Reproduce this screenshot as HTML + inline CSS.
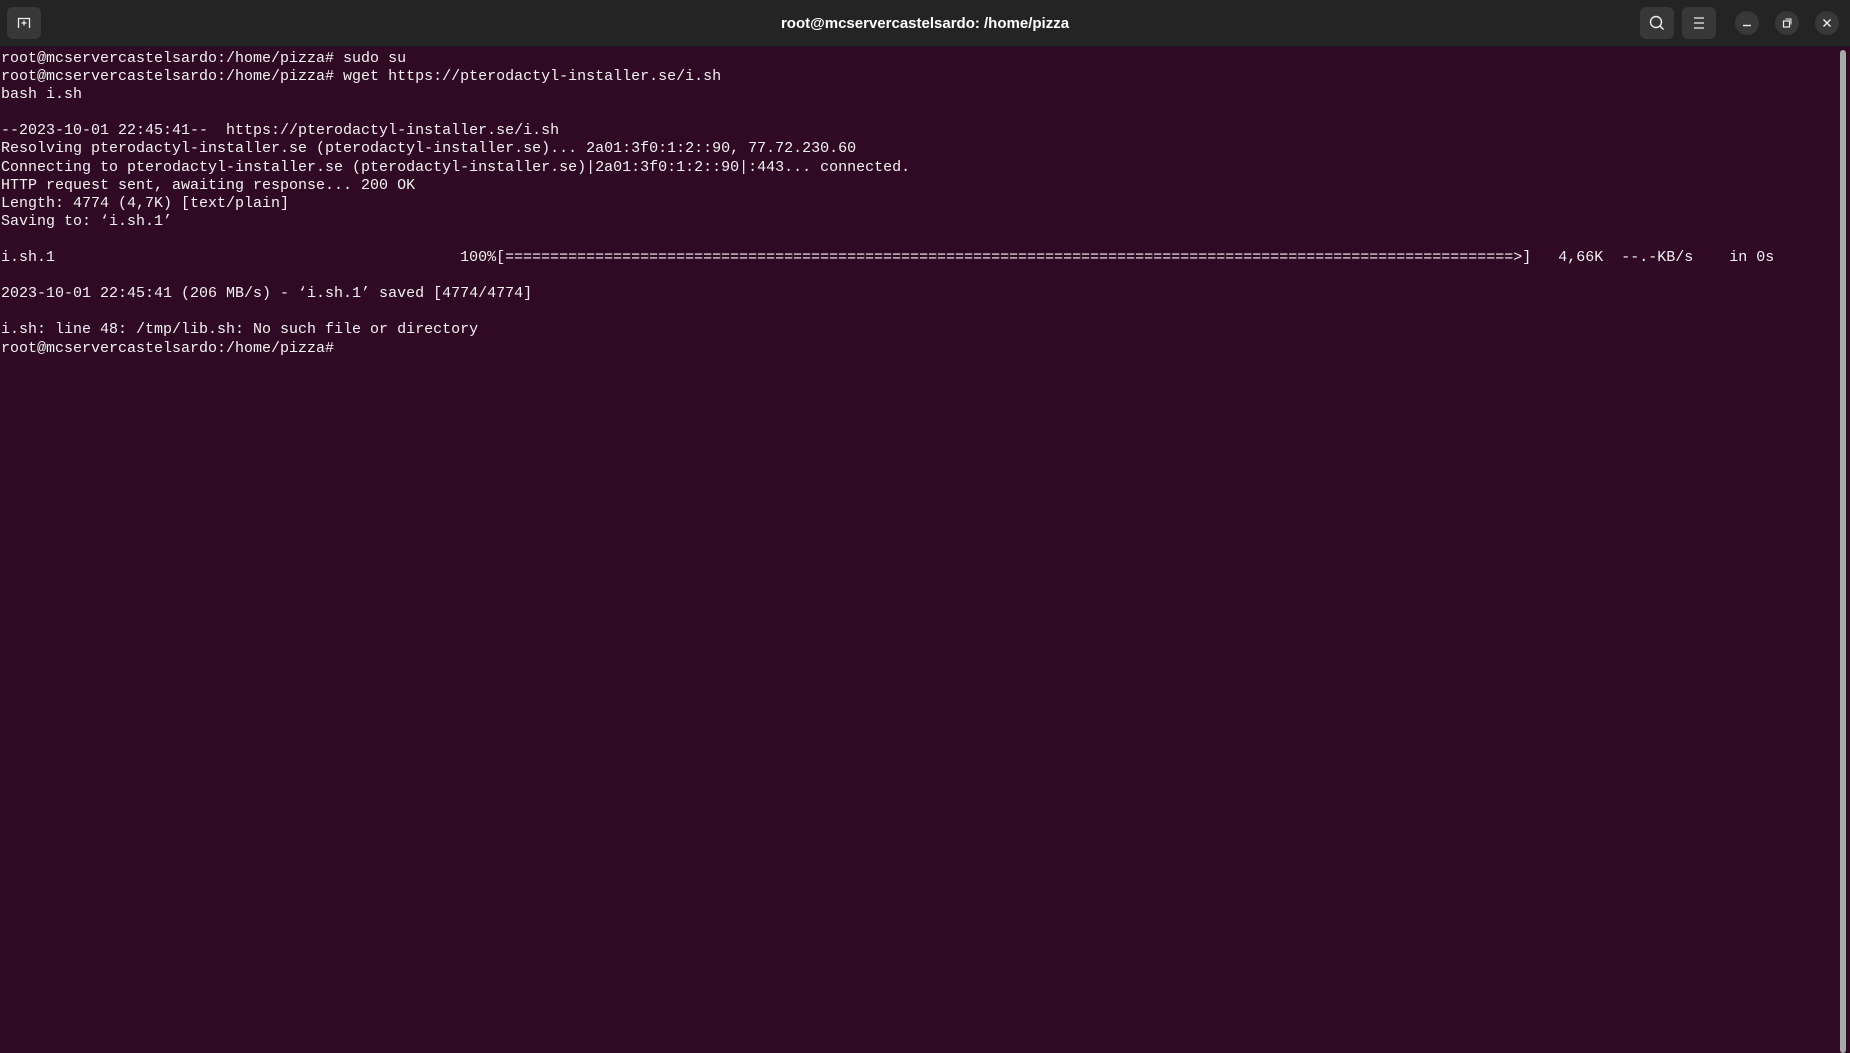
<!DOCTYPE html>
<html><head><meta charset="utf-8"><style>
html,body{margin:0;padding:0;width:1850px;height:1053px;overflow:hidden;background:#300a24;}
.hdr{position:absolute;left:0;top:0;width:1850px;height:46px;background:#242424;border-bottom:1px solid #1b1b1b;}
.title{position:absolute;left:0;width:1850px;top:15px;text-align:center;color:#fff;font:bold 15px "Liberation Sans",sans-serif;}
.btn{position:absolute;top:7px;width:34px;height:32px;background:#383838;border-radius:6px;}
.cir{position:absolute;top:11px;width:24px;height:24px;border-radius:50%;background:#383838;}
pre{position:absolute;left:1px;top:50px;margin:0;color:#f2f2f2;font:15px/18.1px "Liberation Mono",monospace;white-space:pre;}
.sb{position:absolute;left:1840px;top:50px;width:6px;height:1003px;background:#a8a8a8;border-radius:3px;}
</style></head><body>
<div class="hdr">
<div class="btn" style="left:7px"><svg width="34" height="32" viewBox="0 0 34 32"><path d="M11.5 21V11.5h11V21M17 13.5v5M14.5 16h5" fill="none" stroke="#eee" stroke-width="1.3"/></svg></div>
<div class="title">root@mcservercastelsardo: /home/pizza</div>
<div class="btn" style="left:1640px"><svg width="34" height="32" viewBox="0 0 34 32"><circle cx="16" cy="15" r="5.5" fill="none" stroke="#eee" stroke-width="1.4"/><path d="M20 19l3.5 3.5" stroke="#eee" stroke-width="1.5"/></svg></div>
<div class="btn" style="left:1682px"><svg width="34" height="32" viewBox="0 0 34 32"><path d="M12 11h10M12 16h10M12 21h10" stroke="#eee" stroke-width="1.3"/></svg></div>
<div class="cir" style="left:1735px"><svg width="24" height="24"><path d="M8 14.5h8" stroke="#eee" stroke-width="1.4"/></svg></div>
<div class="cir" style="left:1775px"><svg width="24" height="24"><rect x="8.5" y="10" width="6" height="6" fill="none" stroke="#eee" stroke-width="1.2"/><path d="M10.5 8h5.5v5.5" fill="none" stroke="#eee" stroke-width="1"/></svg></div>
<div class="cir" style="left:1815px"><svg width="24" height="24"><path d="M8.5 8.5l7 7M15.5 8.5l-7 7" stroke="#eee" stroke-width="1.4"/></svg></div>
</div>
<pre>root@mcservercastelsardo:/home/pizza# sudo su
root@mcservercastelsardo:/home/pizza# wget https://pterodactyl-installer.se/i.sh
bash i.sh

--2023-10-01 22:45:41--  https://pterodactyl-installer.se/i.sh
Resolving pterodactyl-installer.se (pterodactyl-installer.se)... 2a01:3f0:1:2::90, 77.72.230.60
Connecting to pterodactyl-installer.se (pterodactyl-installer.se)|2a01:3f0:1:2::90|:443... connected.
HTTP request sent, awaiting response... 200 OK
Length: 4774 (4,7K) [text/plain]
Saving to: ‘i.sh.1’

i.sh.1                                             100%[================================================================================================================>]   4,66K  --.-KB/s    in 0s

2023-10-01 22:45:41 (206 MB/s) - ‘i.sh.1’ saved [4774/4774]

i.sh: line 48: /tmp/lib.sh: No such file or directory
root@mcservercastelsardo:/home/pizza# </pre>
<div class="sb"></div>
</body></html>
